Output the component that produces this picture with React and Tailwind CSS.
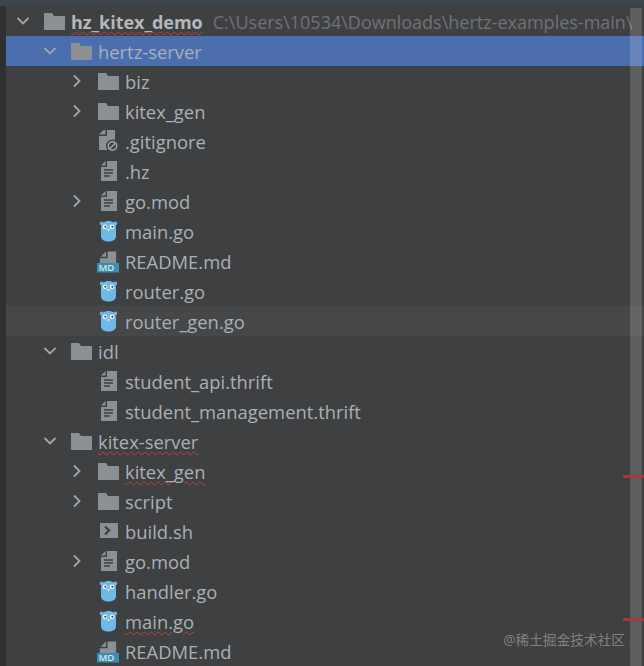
const font = { fontFamily: '"Open Sans", "Noto Sans CJK SC", sans-serif' };

const depthPad = { 0: 'pl-[9px]', 1: 'pl-[36px]', 2: 'pl-[63px]' };

const Chevron = ({ dir }) => (
  <svg width="16" height="16" viewBox="0 0 16 16" fill="none" stroke="#a2a6a9" strokeWidth="1.8">
    {dir === 'down' ? <path d="M2.5 5 L8 10.5 L13.5 5" /> : <path d="M5 2.5 L10.5 8 L5 13.5" />}
  </svg>
);

const Folder = () => (
  <svg width="21" height="17" viewBox="0 0 21 17">
    <path d="M0 0 H8 L10 3 H21 V17 H0 Z" fill="#8b9094" />
  </svg>
);

const FileDoc = () => (
  <svg width="21" height="22" viewBox="0 0 21 22">
    <path d="M9 1 H19 V21 H3 V7 H9 Z" fill="#8b9094" />
    <path d="M3 5.5 L7.5 1 V5.5 Z" fill="#8b9094" />
    <path d="M6 10 H15 M6 13 H15 M6 16 H12" stroke="#3f4042" strokeWidth="1.5" />
  </svg>
);

const GitIgnore = () => (
  <svg width="21" height="22" viewBox="0 0 21 22">
    <path d="M9 0 H17 V20 H1 V6 H9 Z" fill="#8b9094" />
    <path d="M1 4.5 L5.5 0 H7.5 V4.5 Z" fill="#8b9094" />
    <circle cx="14.5" cy="16" r="6.5" fill="#3f4042" />
    <circle cx="14.5" cy="16" r="4.2" fill="none" stroke="#a2a6a9" strokeWidth="1.5" />
    <path d="M11.7 18.8 L17.3 13.2" stroke="#a2a6a9" strokeWidth="1.5" />
  </svg>
);

const Gopher = () => (
  <svg width="21" height="22" viewBox="0 0 21 22">
    <circle cx="3.8" cy="3.5" r="2" fill="#6fb5e0" />
    <circle cx="17.2" cy="3.5" r="2" fill="#6fb5e0" />
    <path d="M3 8 C3 3 6.5 1 10.5 1 C14.5 1 18 3 18 8 V16 C18 20 14.5 21.5 10.5 21.5 C6.5 21.5 3 20 3 16 Z" fill="#6fb9e8" />
    <circle cx="7" cy="6.8" r="2.4" fill="#eef4f7" />
    <circle cx="14" cy="6.8" r="2.4" fill="#eef4f7" />
    <circle cx="7.4" cy="6.8" r="1" fill="#2c3e4a" />
    <circle cx="14.4" cy="6.8" r="1" fill="#2c3e4a" />
    <path d="M9.5 9 H11.5 V11 H9.5 Z" fill="#e8e4d8" />
  </svg>
);

const Readme = () => (
  <svg width="23" height="22" viewBox="0 0 23 22" className="mt-[2px]">
    <path d="M11 0 H20 V12 H3 V7 H11 Z" fill="#8b9094" />
    <path d="M4 5.5 L9.5 0 V5.5 Z" fill="#8b9094" />
    <rect x="0" y="12" width="23" height="10" fill="#3a8fb0" />
    <text x="1.5" y="20.5" fontSize="10" fontWeight="600" fill="#dfe6ea" fontFamily="'Open Sans', sans-serif">MD</text>
  </svg>
);

const Shell = () => (
  <svg width="21" height="18" viewBox="0 0 21 18">
    <rect x="2" y="1" width="18" height="15" fill="#8b9094" />
    <path d="M7 4.5 L11 8.5 L7 12.5" fill="none" stroke="#3f4042" strokeWidth="2.2" />
  </svg>
);

const icons = { folder: Folder, doc: FileDoc, git: GitIgnore, go: Gopher, md: Readme, sh: Shell };

const rows = [
  { depth: 0, arrow: 'down', icon: 'folder', name: 'hz_kitex_demo', bold: true, wavy: true, path: 'C:\\Users\\10534\\Downloads\\hertz-examples-main\\' },
  { depth: 1, arrow: 'down', icon: 'folder', name: 'hertz-server', selected: true },
  { depth: 2, arrow: 'right', icon: 'folder', name: 'biz' },
  { depth: 2, arrow: 'right', icon: 'folder', name: 'kitex_gen' },
  { depth: 2, icon: 'git', name: '.gitignore' },
  { depth: 2, icon: 'doc', name: '.hz' },
  { depth: 2, arrow: 'right', icon: 'doc', name: 'go.mod' },
  { depth: 2, icon: 'go', name: 'main.go' },
  { depth: 2, icon: 'md', name: 'README.md' },
  { depth: 2, icon: 'go', name: 'router.go' },
  { depth: 2, icon: 'go', name: 'router_gen.go', hover: true },
  { depth: 1, arrow: 'down', icon: 'folder', name: 'idl' },
  { depth: 2, icon: 'doc', name: 'student_api.thrift' },
  { depth: 2, icon: 'doc', name: 'student_management.thrift' },
  { depth: 1, arrow: 'down', icon: 'folder', name: 'kitex-server', wavy: true },
  { depth: 2, arrow: 'right', icon: 'folder', name: 'kitex_gen', wavy: true },
  { depth: 2, arrow: 'right', icon: 'folder', name: 'script' },
  { depth: 2, icon: 'sh', name: 'build.sh' },
  { depth: 2, arrow: 'right', icon: 'doc', name: 'go.mod' },
  { depth: 2, icon: 'go', name: 'handler.go' },
  { depth: 2, icon: 'go', name: 'main.go', wavy: true },
  { depth: 2, icon: 'md', name: 'README.md' },
];

const Row = ({ row }) => {
  const Icon = icons[row.icon];
  return (
    <div
      className={`flex h-[30px] shrink-0 items-center whitespace-nowrap ${depthPad[row.depth]} ${
        row.selected ? 'bg-[#4b6eaf]' : row.hover ? 'bg-[#464749]' : ''
      }`}
    >
      <div className="flex w-[16px] shrink-0 justify-center">{row.arrow && <Chevron dir={row.arrow} />}</div>
      <div className="ml-[12px] flex w-[22px] shrink-0 items-center justify-center">
        <Icon />
      </div>
      <span
        className={`ml-[6px] mt-[2px] leading-[30px] ${row.bold ? 'text-[18px] font-bold text-[#b4b8bb]' : 'text-[18.4px] text-[#a9b0b6]'} ${
          row.wavy ? 'underline decoration-wavy decoration-[#b5423c] decoration-1 underline-offset-2' : ''
        }`}
      >
        {row.name}
      </span>
      {row.path && <span className="ml-[10px] mt-[2px] text-[18px] leading-[30px] text-[#707275]">{row.path}</span>}
    </div>
  );
};

export default function App() {
  return (
    <div className="relative flex h-[666px] w-[644px] flex-col overflow-hidden bg-[#3f4042]" style={font}>
      <div className="h-[6px] shrink-0 bg-[#3d4450]" />
      <div className="flex min-h-0 flex-1">
        <div className="w-[6px] shrink-0 bg-[#2f3031]" />
        <div className="flex min-w-0 flex-1 flex-col overflow-hidden">
          {rows.map((row, i) => (
            <Row key={i} row={row} />
          ))}
        </div>
      </div>

      <div className="absolute bottom-0 right-[2px] top-[8px] w-[12px] bg-[rgba(255,255,255,0.16)]" />
      <div className="absolute right-0 top-[475px] h-[3px] w-[21px] bg-[#a8373a]" />
      <div className="absolute right-0 top-[618px] h-[3px] w-[21px] bg-[#a8373a]" />
      <div className="absolute right-[19px] top-[630px] text-[13.7px] leading-[20px] text-[#808080]">@稀土掘金技术社区</div>
    </div>
  );
}
